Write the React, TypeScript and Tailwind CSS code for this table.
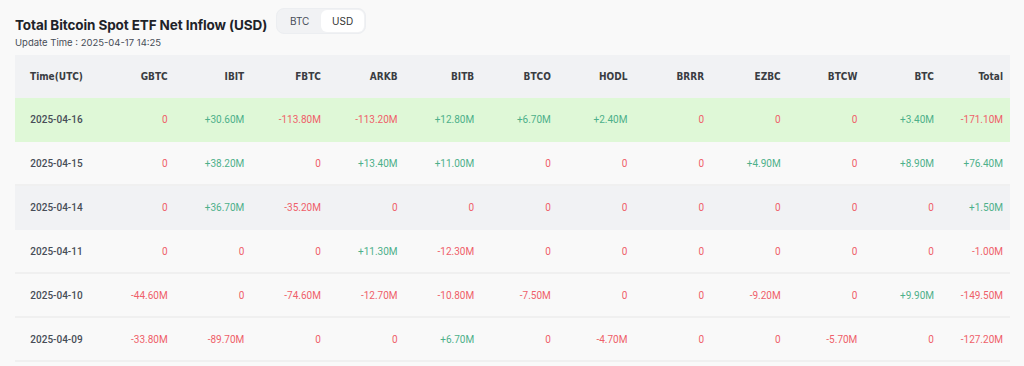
import React from "react";

const cols = ["GBTC", "IBIT", "FBTC", "ARKB", "BITB", "BTCO", "HODL", "BRRR", "EZBC", "BTCW", "BTC", "Total"];

const rows: { date: string; vals: string[]; tone: "green" | "gray" | "plain" }[] = [
  { date: "2025-04-16", tone: "green", vals: ["0", "+30.60M", "-113.80M", "-113.20M", "+12.80M", "+6.70M", "+2.40M", "0", "0", "0", "+3.40M", "-171.10M"] },
  { date: "2025-04-15", tone: "plain", vals: ["0", "+38.20M", "0", "+13.40M", "+11.00M", "0", "0", "0", "+4.90M", "0", "+8.90M", "+76.40M"] },
  { date: "2025-04-14", tone: "gray", vals: ["0", "+36.70M", "-35.20M", "0", "0", "0", "0", "0", "0", "0", "0", "+1.50M"] },
  { date: "2025-04-11", tone: "plain", vals: ["0", "0", "0", "+11.30M", "-12.30M", "0", "0", "0", "0", "0", "0", "-1.00M"] },
  { date: "2025-04-10", tone: "plain", vals: ["-44.60M", "0", "-74.60M", "-12.70M", "-10.80M", "-7.50M", "0", "0", "-9.20M", "0", "+9.90M", "-149.50M"] },
  { date: "2025-04-09", tone: "plain", vals: ["-33.80M", "-89.70M", "0", "0", "+6.70M", "0", "-4.70M", "0", "0", "-5.70M", "0", "-127.20M"] },
];

const grid = "grid grid-cols-[83px_repeat(11,minmax(0,1fr))_69px]";

export default function App() {
  return (
    <div className="w-[1024px] h-[366px] overflow-hidden bg-[#f9f9f9] pl-[15px]">
      <div className="flex items-end pt-[8px]">
        <div className="font-['Inter',sans-serif] font-bold text-[13.5px] leading-[18px] text-[#1e2329] tracking-[-0.1px]">
          Total Bitcoin Spot ETF Net Inflow (USD)
        </div>
        <div className="ml-[9px] flex h-[26px] w-[90px] rounded-[8px] border border-[#eceef1] bg-[#f1f2f4] p-[1px] font-['Inter',sans-serif] text-[10px]">
          <div className="flex flex-1 items-center justify-center text-[#474d57]">BTC</div>
          <div className="flex flex-1 items-center justify-center rounded-[6px] bg-white text-[#333]">USD</div>
        </div>
      </div>
      <div className="mt-[1px] font-['Inter',sans-serif] text-[9.5px] leading-[16px] text-[#474d57]">
        Update Time : 2025-04-17 14:25
      </div>
      <div className="mt-[4px] w-[995px]">
        <div className={`${grid} h-[43px] items-center bg-[#f1f2f4] font-['Liberation_Sans_Narrow','DejaVu_Sans_Condensed',sans-serif] font-bold text-[10px] text-[#3a3d42]`}>
          <div className="text-center">Time(UTC)</div>
          {cols.map((c) => (
            <div key={c} className="pr-[7px] text-right">{c}</div>
          ))}
        </div>
        {rows.map((r) => (
          <div
            key={r.date}
            className={`${grid} h-[44px] items-center border-b-2 font-['Roboto',sans-serif] text-[10px] ${
              r.tone === "green"
                ? "bg-[#dff8d7] border-[#dff8d7]"
                : r.tone === "gray"
                ? "bg-[#f1f2f4] border-[#f1f2f4]"
                : "bg-[#f9f9f9] border-[#f0f0f0]"
            }`}
          >
            <div className="text-center font-medium text-[#474d57]">{r.date}</div>
            {r.vals.map((v, i) => (
              <div
                key={i}
                className={`pr-[7px] text-right ${v.startsWith("+") ? "text-[#4db08a]" : "text-[#ef5f6a]"}`}
              >
                {v}
              </div>
            ))}
          </div>
        ))}
      </div>
    </div>
  );
}
